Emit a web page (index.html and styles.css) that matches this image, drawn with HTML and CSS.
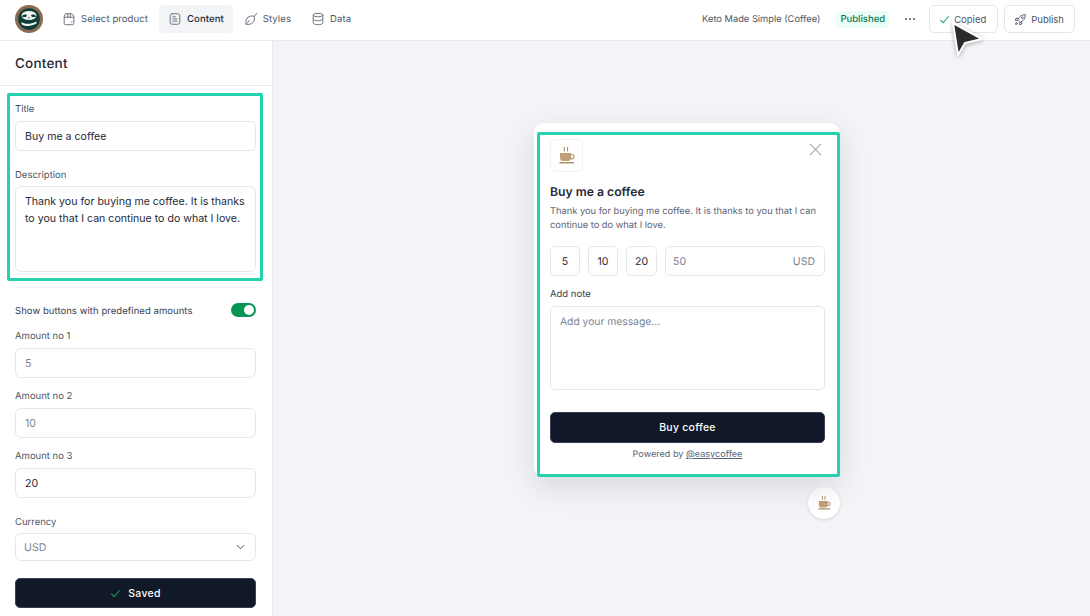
FILE: index.html
```html
<!DOCTYPE html>
<html lang="en">
<head>
    <meta charset="UTF-8">
    <meta name="viewport" content="width=device-width, initial-scale=1.0">
    <title>Content</title>
    <link rel="stylesheet" href="styles.css">
</head>
<body>

<header class="topbar">
    <svg class="logo" viewBox="0 0 28 28">
        <circle cx="14" cy="14" r="14" fill="#8a6a50"/>
        <circle cx="14" cy="14" r="10.800" fill="#0b3f38"/>
        <ellipse cx="14" cy="10.500" rx="7.500" ry="4.500" fill="#f4f4f0"/>
        <path d="M6.800 11.500c1-2 3.500-2.500 5-1.500 .5 1.500-1.500 3-5 1.500zM21.200 11.500c-1-2-3.500-2.500-5-1.500-.5 1.500 1.500 3 5 1.500z" fill="#0b3f38"/>
        <path d="M12.800 12.500h2.400l-1.200 1.200z" fill="#0b3f38"/>
        <path d="M6.500 17c3 2.500 9 2.500 15-.5v2c-5 3-12 3.500-15 .5z" fill="#f4f4f0"/>
    </svg>
    <nav class="nav">
        <a class="nav-item">
            <svg class="nav-icon" viewBox="0 0 16 16"><path d="M4.500 2h7l2 3v8a1.500 1.500 0 0 1-1.500 1.500h-8A1.500 1.500 0 0 1 2.500 13V5zM2.500 6h11M6.500 2v4M9.500 2v4M10.500 11.500h1"/></svg>
            Select product
        </a>
        <a class="nav-item active">
            <svg class="nav-icon" viewBox="0 0 16 16"><path d="M5 2h6a2.500 2.500 0 0 1 2.500 2.500v7A2.500 2.500 0 0 1 11 14H5a2.500 2.500 0 0 1-2.500-2.500v-7A2.500 2.500 0 0 1 5 2zM5.500 5.500h3M5.500 8h5M5.500 10.500h5"/></svg>
            Content
        </a>
        <a class="nav-item">
            <svg class="nav-icon" viewBox="0 0 16 16"><path d="M14.500 1.500L11.500 5M4 6.500C6 4.500 9 4 11.500 5c1 2.500.5 5.500-1.500 7.500-2 1.500-5 2-7.500 1.500C1.500 11.500 2 8.500 4 6.500zM2.500 14L6 10"/></svg>
            Styles
        </a>
        <a class="nav-item">
            <svg class="nav-icon" viewBox="0 0 16 16"><ellipse cx="8" cy="3.500" rx="5.500" ry="2"/><path d="M2.500 3.500v9c0 1.100 2.500 2 5.500 2s5.500-.9 5.500-2v-9M2.500 8c0 1.100 2.500 2 5.500 2s5.500-.9 5.500-2"/></svg>
            Data
        </a>
    </nav>
    <div class="topbar-right">
        <span class="product-name">Keto Made Simple (Coffee)</span>
        <span class="badge">Published</span>
        <svg class="dots" viewBox="0 0 12 4"><circle cx="2" cy="2" r="1"/><circle cx="6" cy="2" r="1"/><circle cx="10" cy="2" r="1"/></svg>
        <button class="top-btn copied-btn">
            <svg class="check" viewBox="0 0 12 12"><path d="M1.500 6.500l3 3 6-7"/></svg>
            Copied
        </button>
        <button class="top-btn">
            <svg class="rocket" viewBox="0 0 16 16"><path d="M6 10L4.500 8.500C6 4.500 9.500 2 14 2c0 4.500-2.500 8-6.500 9.500zM5 6.500H2.500L1.500 9h3M9.500 11v2.500L7 14.500v-3M3.500 11C2.500 11.500 2 13 2 14c1 0 2.500-.5 3-1.500"/><circle cx="10.300" cy="5.700" r="1"/></svg>
            Publish
        </button>
    </div>
</header>

<div class="workspace">
    <aside class="sidebar">
        <h2 class="sidebar-title">Content</h2>
        <div class="sidebar-body">
            <label class="field-label">Title</label>
            <input class="field" type="text" value="Buy me a coffee">
            <label class="field-label desc-label">Description</label>
            <textarea class="field field-area">Thank you for buying me coffee. It is thanks to you that I can continue to do what I love.</textarea>
            <hr class="divider">
            <div class="toggle-row">
                <span class="toggle-text">Show buttons with predefined amounts</span>
                <span class="toggle"><span class="toggle-knob"></span></span>
            </div>
            <label class="field-label amount-label">Amount no 1</label>
            <input class="field" type="text" placeholder="5">
            <label class="field-label amount-label">Amount no 2</label>
            <input class="field" type="text" placeholder="10">
            <label class="field-label amount-label">Amount no 3</label>
            <input class="field" type="text" value="20">
            <label class="field-label amount-label currency-label">Currency</label>
            <div class="field select">
                <span>USD</span>
                <svg class="chevron" viewBox="0 0 10 6"><path d="M1 1l4 4 4-4"/></svg>
            </div>
            <button class="dark-btn saved-btn">
                <svg class="check" viewBox="0 0 12 12"><path d="M1.500 6.500l3 3 6-7"/></svg>
                Saved
            </button>
        </div>
        <div class="highlight highlight-form"></div>
    </aside>

    <main class="canvas">
        <div class="widget">
            <div class="modal">
                <div class="modal-top">
                    <div class="cup-tile">
                        <svg class="cup" viewBox="0 0 16 17"><use href="#cup-shape"/></svg>
                    </div>
                    <svg class="close" viewBox="0 0 14 14"><path d="M1 1l12 12M13 1L1 13"/></svg>
                </div>
                <h3 class="modal-title">Buy me a coffee</h3>
                <p class="modal-text">Thank you for buying me coffee. It is thanks to you that I can continue to do what I love.</p>
                <div class="amounts">
                    <span class="amount">5</span>
                    <span class="amount">10</span>
                    <span class="amount amount-wide">20</span>
                    <div class="amount-input"><span>50</span><span>USD</span></div>
                </div>
                <label class="note-label">Add note</label>
                <div class="note">Add your message...</div>
                <button class="dark-btn buy-btn">Buy coffee</button>
                <p class="powered">Powered by <a class="powered-link">@easycoffee</a></p>
                <div class="highlight highlight-modal"></div>
            </div>
            <div class="float-btn">
                <svg class="cup-small" viewBox="0 0 16 17">
                    <g id="cup-shape">
                        <path d="M1 6h11v1h1a2.700 2.700 0 0 1 0 5.400h-1.500A3.500 3.500 0 0 1 8.500 14h-4A3.500 3.500 0 0 1 1 10.500zM12 8.300v2.800h1a1.400 1.400 0 0 0 0-2.800z" fill="#c19f78" fill-rule="evenodd"/>
                        <path d="M.5 15h14.500v1.500H.5zM4.800 0h1.100v4.500H4.800zM8 0h1.100v4.500H8z" fill="#b08d66"/>
                    </g>
                </svg>
            </div>
        </div>
    </main>
</div>

<svg class="cursor" viewBox="0 0 36 38">
    <path d="M3 3l29 16-17 4-7 12z" fill="#2b2b2e" stroke="#fff" stroke-width="2" stroke-linejoin="round"/>
</svg>

</body>
</html>
```

FILE: styles.css
```css
/* Page */
* {
    box-sizing: border-box;
}

body {
    margin: 0;
    height: 616px;
    overflow: hidden;
    position: relative;
    font-family: 'Inter', sans-serif;
    text-rendering: geometricPrecision;
    color: #111827;
    background-color: #fff;
    display: flex;
    flex-direction: column;
}

/* Top bar */
.topbar {
    height: 41px;
    flex-shrink: 0;
    display: flex;
    align-items: center;
    padding: 0 15px 2px;
    background-color: #fff;
    border-bottom: 1px solid #e9eaee;
}

.logo {
    width: 28px;
    height: 28px;
    margin-right: 10px;
}

.nav {
    display: flex;
    align-items: center;
    gap: 2px;
}

.nav-item {
    display: flex;
    align-items: center;
    gap: 5px;
    height: 28px;
    padding: 0 9px;
    border-radius: 5px;
    font-size: 9.500px;
    letter-spacing: 0.1px;
    color: #4b5563;
    white-space: nowrap;
}

.nav-item.active {
    background-color: #f3f4f6;
    color: #1f2937;
    font-weight: 500;
}

.nav-icon {
    width: 14px;
    height: 14px;
    fill: none;
    stroke: #6b7280;
    stroke-width: 1.100;
    stroke-linecap: round;
    stroke-linejoin: round;
}

.topbar-right {
    margin-left: auto;
    display: flex;
    align-items: center;
}

.product-name {
    font-size: 9.300px;
    color: #4b5563;
    margin-right: 16px;
}

.badge {
    font-size: 9.500px;
    font-weight: 500;
    color: #047857;
    background-color: #ecfdf5;
    border-radius: 3px;
    padding: 3px 4px;
    margin-right: 15px;
}

.dots {
    width: 12px;
    height: 4px;
    fill: #4b5563;
    margin-right: 13px;
}

.top-btn {
    display: flex;
    align-items: center;
    gap: 4px;
    height: 28px;
    padding: 0 10px 0 9px;
    font-family: inherit;
    font-size: 9.500px;
    color: #4b5563;
    background-color: #fff;
    border: 1px solid #e5e7eb;
    border-radius: 5px;
}

.copied-btn {
    margin-right: 6px;
    padding-right: 11px;
}

.check {
    width: 11px;
    height: 11px;
    fill: none;
    stroke: #10a566;
    stroke-width: 1.100;
}

.rocket {
    width: 13px;
    height: 13px;
    fill: none;
    stroke: #374151;
    stroke-width: 1;
    stroke-linejoin: round;
}

/* Layout below the top bar */
.workspace {
    flex: 1;
    display: flex;
    min-height: 0;
}

/* Sidebar */
.sidebar {
    width: 273px;
    flex-shrink: 0;
    position: relative;
    background-color: #fff;
    border-right: 1px solid #e9eaee;
}

.sidebar-title {
    height: 45px;
    margin: 0;
    padding: 15px 15px 0;
    font-size: 13.500px;
    font-weight: 500;
    letter-spacing: 0.2px;
    color: #1f2937;
    border-bottom: 1px solid #e9eaee;
}

.sidebar-body {
    padding: 17px 16px 0 15px;
    display: flex;
    flex-direction: column;
}

.field-label {
    display: block;
    font-size: 9.500px;
    line-height: 14px;
    color: #4b5563;
    margin-bottom: 4px;
}

.desc-label {
    margin-top: 18px;
    margin-bottom: 3px;
}

.amount-label {
    margin-top: 12px;
}

.currency-label {
    margin-top: 18px;
    margin-bottom: 3px;
}

.field {
    width: 100%;
    height: 30px;
    padding: 0 9px;
    font-family: inherit;
    font-size: 10.600px;
    color: #1f2937;
    background-color: #fff;
    border: 1px solid #e5e7eb;
    border-radius: 6px;
    outline: none;
}

.field::placeholder {
    color: #7b8494;
}

.field-area {
    height: 86px;
    padding: 7px 9px;
    line-height: 16.500px;
    resize: none;
}

.divider {
    width: 100%;
    margin: 15px 0 0;
    border: none;
    border-top: 1px solid #f0f1f4;
}

.toggle-row {
    display: flex;
    align-items: center;
    justify-content: space-between;
    height: 14px;
    margin-top: 15px;
    margin-bottom: 1px;
    font-size: 9.500px;
    letter-spacing: 0.05px;
    color: #374151;
}

.toggle-text {
    padding-top: 2px;
}

.toggle {
    width: 25px;
    height: 14px;
    padding: 2px;
    display: flex;
    justify-content: flex-end;
    border-radius: 7px;
    background-color: #059655;
}

.toggle-knob {
    width: 10px;
    height: 10px;
    border-radius: 50%;
    background-color: #fff;
}

.select {
    height: 28px;
    display: flex;
    align-items: center;
    justify-content: space-between;
    padding: 0 10px 0 8px;
    color: #7b8494;
}

.chevron {
    width: 9px;
    height: 6px;
    fill: none;
    stroke: #4b5563;
    stroke-width: 1.100;
}

.dark-btn {
    width: 100%;
    height: 30px;
    display: flex;
    align-items: center;
    justify-content: center;
    gap: 7px;
    font-family: inherit;
    font-size: 10.500px;
    font-weight: 500;
    letter-spacing: 0.25px;
    color: #fff;
    background-color: #111827;
    border: 1px solid #374151;
    border-radius: 5px;
}

.saved-btn {
    margin-top: 17px;
}

/* Green callout frames */
.highlight {
    position: absolute;
    border: 3px solid #22d3ae;
    border-radius: 2px;
    pointer-events: none;
}

.highlight-form {
    left: 7px;
    top: 52px;
    width: 256px;
    height: 188px;
}

.highlight-modal {
    left: 3px;
    top: 9px;
    width: 303px;
    height: 345px;
}

/* Canvas with the preview */
.canvas {
    flex: 1;
    background-color: #f3f4f7;
    padding: 82px 0 0 261px;
}

.widget {
    width: 306px;
}

.modal {
    position: relative;
    width: 306px;
    height: 354px;
    padding: 16px 15px 0 16px;
    background-color: #fff;
    border-radius: 10px;
    box-shadow: 0 10px 30px rgba(17, 24, 39, 0.12);
}

.modal-top {
    display: flex;
    justify-content: space-between;
    align-items: flex-start;
}

.cup-tile {
    width: 33px;
    height: 33px;
    display: flex;
    align-items: center;
    justify-content: center;
    border: 1px solid #eef0f3;
    border-radius: 6px;
}

.cup {
    width: 16px;
    height: 17px;
}

.cup-small {
    width: 13px;
    height: 14px;
}

.close {
    width: 13px;
    height: 13px;
    margin-top: 4px;
    margin-right: 3px;
    fill: none;
    stroke: #9aa3b2;
    stroke-width: 1.100;
}

.modal-title {
    margin: 12px 0 0;
    font-size: 12.200px;
    line-height: 15px;
    font-weight: 600;
    color: #1f2937;
}

.modal-text {
    margin: 6px 0 0;
    font-size: 9.300px;
    line-height: 14px;
    color: #5b6474;
}

.amounts {
    display: flex;
    gap: 8px;
    margin-top: 13px;
}

.amount {
    width: 30px;
    height: 30px;
    display: flex;
    align-items: center;
    justify-content: center;
    font-size: 10.500px;
    color: #1f2937;
    border: 1px solid #e5e7eb;
    border-radius: 5px;
}

.amount-wide {
    width: 31px;
}

.amount-input {
    flex: 1;
    height: 30px;
    display: flex;
    align-items: center;
    justify-content: space-between;
    padding: 0 9px 0 7px;
    font-size: 10.500px;
    color: #7b8494;
    border: 1px solid #e5e7eb;
    border-radius: 5px;
}

.note-label {
    display: block;
    font-size: 9.500px;
    line-height: 12px;
    margin-top: 13px;
    margin-bottom: 5px;
    color: #374151;
}

.note {
    height: 84px;
    padding: 9px;
    font-size: 10.300px;
    color: #7b8494;
    border: 1px solid #e5e7eb;
    border-radius: 5px;
}

.buy-btn {
    margin-top: 22px;
    height: 31px;
}

.powered {
    margin: 6px 0 0;
    text-align: center;
    font-size: 9.100px;
    line-height: 12px;
    color: #5b6474;
}

.powered-link {
    text-decoration: underline;
}

.float-btn {
    width: 32px;
    height: 32px;
    margin: 10px 0 0 auto;
    display: flex;
    align-items: center;
    justify-content: center;
    background-color: #fff;
    border-radius: 50%;
    box-shadow: 0 1px 3px rgba(17, 24, 39, 0.15);
}

/* Mouse pointer on top of everything */
.cursor {
    position: absolute;
    left: 950px;
    top: 20px;
    width: 36px;
    height: 38px;
    filter: drop-shadow(0 1px 2px rgba(0, 0, 0, 0.3));
}
```
